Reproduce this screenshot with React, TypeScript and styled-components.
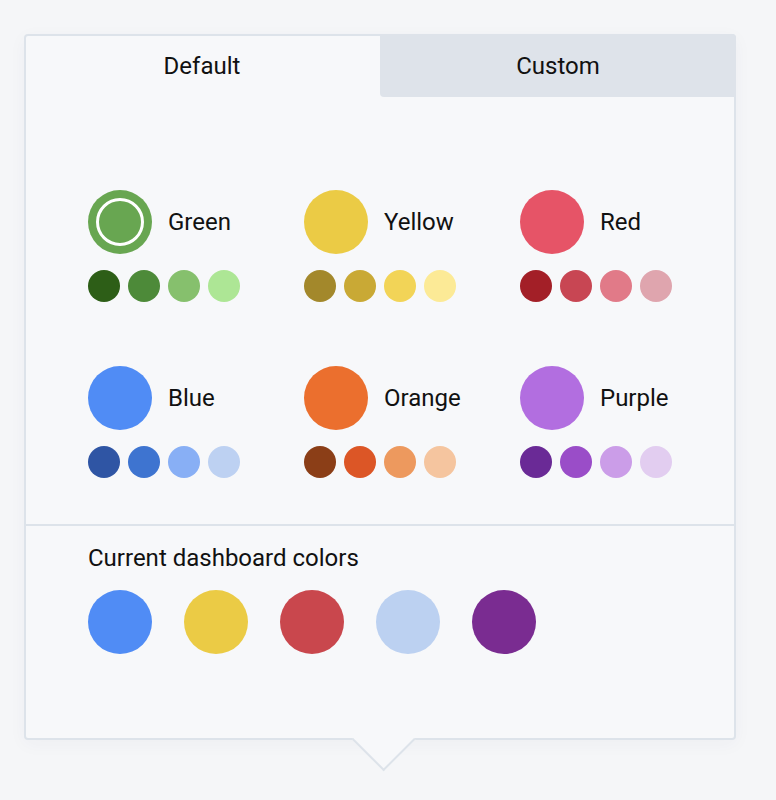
import React from "react";
import styled, { createGlobalStyle } from "styled-components";

const GlobalStyle = createGlobalStyle`
  html, body { margin: 0; padding: 0; background: #f5f6f8; }
  body { font-family: Roboto, "Liberation Sans", sans-serif; color: #111; }
`;

const Page = styled.div`
  padding: 34px 0 0 24px;
  height: 766px;
`;

const Panel = styled.div`
  position: relative;
  width: 708px;
  border: 2px solid #dde3ea;
  border-radius: 4px;
  background: #f7f8fa;
  box-shadow: 0 4px 18px rgba(40, 60, 90, 0.04);
`;

const Tabs = styled.div`
  display: grid;
  grid-template-columns: 356px 1fr;
  height: 63px;
  margin: -2px -2px 0 -2px;
`;

const Tab = styled.div<{ $active?: boolean }>`
  display: flex;
  align-items: center;
  justify-content: center;
  font-size: 24px;
  background: ${(p) => (p.$active ? "transparent" : "#dee3ea")};
  border-radius: ${(p) => (p.$active ? "4px 0 0 0" : "0 4px 0 4px")};
`;

const Grid = styled.div`
  display: grid;
  grid-template-columns: repeat(3, 216px);
  row-gap: 64px;
  padding: 93px 0 46px 62px;
`;

const Group = styled.div`
  display: flex;
  flex-direction: column;
  gap: 16px;
`;

const Head = styled.div`
  display: flex;
  align-items: center;
  gap: 16px;
`;

const BigDot = styled.div<{ $c: string; $selected?: boolean }>`
  width: 64px;
  height: 64px;
  border-radius: 50%;
  background: ${(p) => p.$c};
  box-sizing: border-box;
  position: relative;
  flex-shrink: 0;
  &::after {
    content: "";
    display: ${(p) => (p.$selected ? "block" : "none")};
    position: absolute;
    inset: 8px;
    border-radius: 50%;
    border: 3px solid #fff;
  }
`;

const Label = styled.span`
  font-size: 24px;
  line-height: 28px;
`;

const Shades = styled.div`
  display: flex;
  gap: 8px;
`;

const SmallDot = styled.div<{ $c: string }>`
  width: 32px;
  height: 32px;
  border-radius: 50%;
  background: ${(p) => p.$c};
`;

const Divider = styled.div`
  height: 2px;
  background: #dde3ea;
`;

const Current = styled.div`
  padding: 18px 0 84px 62px;
  display: flex;
  flex-direction: column;
  gap: 18px;
`;

const CurrentTitle = styled.div`
  font-size: 24px;
  line-height: 28px;
`;

const CurrentRow = styled.div`
  display: flex;
  gap: 32px;
`;

const Caret = styled.div`
  position: absolute;
  left: 335.4px;
  bottom: -24.6px;
  width: 45.25px;
  height: 45.25px;
  box-sizing: border-box;
  background: #f7f8fa;
  border-right: 2px solid #dde3ea;
  border-bottom: 2px solid #dde3ea;
  transform: rotate(45deg);
`;

const groups = [
  { name: "Green", c: "#68a651", shades: ["#2d5e17", "#4d8a39", "#86c06d", "#ade695"], selected: true },
  { name: "Yellow", c: "#ebcb45", shades: ["#a3882b", "#c9a935", "#f2d457", "#fcea96"] },
  { name: "Red", c: "#e65467", shades: ["#a31f27", "#c84653", "#e17a88", "#dfa5ae"] },
  { name: "Blue", c: "#508cf5", shades: ["#2f55a4", "#3e74d0", "#88aff5", "#bdd1f2"] },
  { name: "Orange", c: "#eb6f2e", shades: ["#8b3e17", "#dc5626", "#ed995e", "#f5c59f"] },
  { name: "Purple", c: "#b26ee0", shades: ["#6a2a96", "#9a4dc8", "#cb9de8", "#e2cdf0"] },
];

const current = ["#508cf5", "#ebcb45", "#c9474d", "#bcd1f1", "#7a2c91"];

export default function App() {
  return (
    <>
      <GlobalStyle />
      <Page>
        <Panel>
          <Tabs>
            <Tab $active>Default</Tab>
            <Tab>Custom</Tab>
          </Tabs>
          <Grid>
            {groups.map((g) => (
              <Group key={g.name}>
                <Head>
                  <BigDot $c={g.c} $selected={g.selected} />
                  <Label>{g.name}</Label>
                </Head>
                <Shades>
                  {g.shades.map((s) => (
                    <SmallDot key={s} $c={s} />
                  ))}
                </Shades>
              </Group>
            ))}
          </Grid>
          <Divider />
          <Current>
            <CurrentTitle>Current dashboard colors</CurrentTitle>
            <CurrentRow>
              {current.map((c) => (
                <BigDot key={c} $c={c} />
              ))}
            </CurrentRow>
          </Current>
          <Caret />
        </Panel>
      </Page>
    </>
  );
}
